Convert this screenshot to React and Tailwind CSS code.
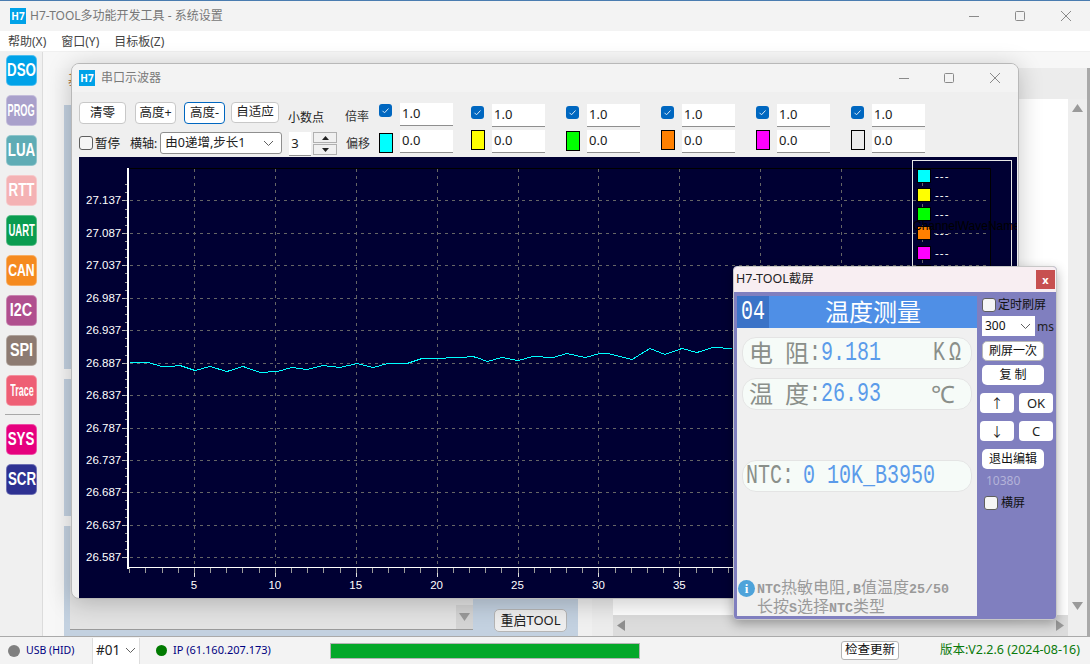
import React from "react";

const sideTop = [
  ["DSO", "bg-[#00a2e8]", "text-[18px] scale-x-[.74]"],
  ["PROG", "bg-[#a9a0cb]", "text-[17px] scale-x-[.54]"],
  ["LUA", "bg-[#5facb5]", "text-[18px] scale-x-[.74]"],
  ["RTT", "bg-[#f4b2b4]", "text-[18px] scale-x-[.74]"],
  ["UART", "bg-[#0a9c50]", "text-[17px] scale-x-[.56]"],
  ["CAN", "bg-[#f58a1f]", "text-[17px] scale-x-[.72]"],
  ["I2C", "bg-[#b04f8e]", "text-[18px] scale-x-[.8]"],
  ["SPI", "bg-[#8d7b72]", "text-[18px] scale-x-[.8]"],
  ["Trace", "bg-[#ee5f75]", "text-[16px] scale-x-[.56]"],
];
const sideBottom = [
  ["SYS", "bg-[#e6007e]", "text-[18px] scale-x-[.74]"],
  ["SCR", "bg-[#2e3192]", "text-[18px] scale-x-[.74]"],
];

const channels = [
  { box: "mt-[1px]", input: "mt-0", color: "bg-[#00ffff] mt-[3px]", w: "w-[92px]" },
  { box: "mt-[3px]", input: "mt-[1px]", color: "bg-[#ffff00]", w: "w-[95px]" },
  { box: "mt-[3px]", input: "mt-[1px]", color: "bg-[#00ff00] mt-[1px]", w: "w-[95px]" },
  { box: "mt-[3px]", input: "mt-[1px]", color: "bg-[#ff8000]", w: "w-[95px]" },
  { box: "mt-[3px]", input: "mt-[1px]", color: "bg-[#ff00ff]", w: "w-[95px]" },
  { box: "mt-[3px]", input: "mt-[1px]", color: "bg-[#ececec]", w: "w-[95px]" },
];

const yLabels = ["27.137","27.087","27.037","26.987","26.937","26.887","26.837","26.787","26.737","26.687","26.637","26.587"];
const yAt = (i) => 200.4 + i * 32.45;
const xAt = (n) => 129.2 + (n - 1) * 16.18;
const curve = [[130,362.5],[148,362.5],[162,366.5],[170,366.5],[180,365.5],[195,370.5],[210,366.5],[227,371.5],[243,366.5],[260,372.5],[277,371.5],[292,367.5],[307,369.5],[323,365.5],[340,367.5],[357,363.5],[373,367.5],[388,363.5],[407,363.5],[422,358.5],[445,358.5],[447,357.5],[462,357.5],[472,356.5],[477,357.5],[487,361.5],[502,357.5],[518,360.5],[533,356.5],[553,357.5],[567,353.5],[585,357.5],[600,353.5],[608,353.5],[632,359.5],[650,348.5],[665,354.5],[682,348.5],[697,352.5],[713,347.5],[732,348.5]];

function H7({ className }) {
  return <div className={"flex items-center justify-center bg-[#00a2e8] text-white font-bold text-[10px] leading-none " + className}>H7</div>;
}

function WinControls({ gapA, gapB }) {
  return (
    <div className="flex items-center text-[#8a8a8a]">
      <svg width="12" height="12" viewBox="0 0 12 12"><path d="M1 6.500h10" stroke="#8a8a8a" fill="none" /></svg>
      <svg className={gapA} width="12" height="12" viewBox="0 0 12 12"><rect x="1.500" y="1.500" width="9" height="9" rx="1" stroke="#8a8a8a" fill="none" /></svg>
      <svg className={gapB} width="12" height="12" viewBox="0 0 12 12"><path d="M1 1l10 10M11 1L1 11" stroke="#8a8a8a" fill="none" /></svg>
    </div>
  );
}

function Check() {
  return <span className="block w-[14px] h-[14px] rounded-[3px] border border-[#5f5f5f] bg-[#f6f6f6]" />;
}

function BlueCheck() {
  return (
    <span className="flex items-center justify-center w-[13px] h-[13px] rounded-[3px] bg-[#0067c0]">
      <svg width="9" height="9" viewBox="0 0 9 9"><path d="M1.500 4.800l2 2 4-4.300" stroke="#d7e8f7" strokeWidth="1" fill="none" /></svg>
    </span>
  );
}

function Chevron() {
  return <svg width="11" height="7" viewBox="0 0 11 7"><path d="M1 1l4.500 4.500L10 1" stroke="#606060" fill="none" /></svg>;
}

function Field({ children }) {
  return <div className="w-[53px] h-[23px] bg-white border-b border-[#8f8f8f] pl-[2px] text-[13px] leading-[21px] text-[#1a1a1a]">{children}</div>;
}

function Chart() {
  const minor = [];
  for (let n = 1; n <= 54; n++) minor.push(n);
  return (
    <svg className="block w-[938px] h-[441px] bg-[#000033]" viewBox="79 157 938 441" fontFamily="'Liberation Sans',sans-serif" fontSize="11.5">
      <rect x="128.500" y="168.500" width="861" height="399" fill="none" stroke="#000" />
      {yLabels.map((l, i) => (
        <g key={l}>
          <path d={`M122 ${Math.round(yAt(i)) + 0.5}h6`} stroke="#bdbdbd" />
          <path d={`M130 ${Math.round(yAt(i)) + 0.5}H990`} stroke="#666" strokeDasharray="3 4" />
          <text x="86" y={yAt(i) + 4} fill="#fff">{l}</text>
        </g>
      ))}
      {Array.from({ length: 46 }).map((_, i) => (
        <path key={i} d={`M125 ${Math.round(184.2 + i * 8.11) + 0.5}h3`} stroke="#9a9a9a" />
      ))}
      {[5,10,15,20,25,30,35,40,45,50].map((n) => (
        <g key={n}>
          <path d={`M${Math.round(xAt(n)) + 0.5} 169V566`} stroke="#666" strokeDasharray="3 4" />
          <path d={`M${Math.round(xAt(n)) + 0.5} 568v9`} stroke="#e0e0e0" />
          {n <= 35 && <text x={xAt(n)} y="589" fill="#fff" textAnchor="middle">{n}</text>}
        </g>
      ))}
      {minor.map((n) => (
        <path key={n} d={`M${Math.round(xAt(n)) + 0.5} 568v5`} stroke="#9a9a9a" />
      ))}
      <path d="M128 168V569" stroke="#fff" strokeWidth="2" />
      <path d="M127 567.500H990" stroke="#fff" />
      <polyline points={curve.map((p) => p.join(",")).join(" ")} fill="none" stroke="#00ffff" strokeWidth="1" shapeRendering="crispEdges" />
      <rect x="912.500" y="160.500" width="99" height="130" fill="#000033" stroke="#e8e8e8" />
      <path d="M913 168.500H990.500V290" fill="none" stroke="#000" />
      <path d="M913 200.500H990M913 233.500H990M913 265.500H990" stroke="#666" strokeDasharray="3 4" />
      <path d="M922.500 169V290" stroke="#666" strokeDasharray="3 4" />
      {[["#00ffff",170],["#ffff00",189],["#00ff00",208],["#ff8000",227],["#ff00ff",247],["#e8e8e8",266]].map(([c, y]) => (
        <g key={y}>
          <rect x="917.500" y={y - 0.5} width="13" height="13" fill={c} stroke="#000" />
          <text x="935" y={y + 10} fill="#fff" letterSpacing="1">---</text>
        </g>
      ))}
      <text x="913" y="230" fill="#000" fontSize="12">ChannelWaveName</text>
    </svg>
  );
}

const Mono = ({ children, className = "" }) => (
  <span className={"inline-block font-['Liberation_Mono',monospace] text-[20px] leading-none scale-y-[1.4] " + className}>{children}</span>
);

const Latin = ({ children }) => (
  <span className="font-['Liberation_Mono',monospace] font-bold text-[13.33px]">{children}</span>
);

function SideBtn({ children, className }) {
  return <div className={"bg-white rounded-[5px] border border-[#b9b9b9] h-[20px] w-[62px] flex items-center justify-center text-[12px] leading-none text-[#111] " + className}>{children}</div>;
}

function SmallBtn({ children, className = "" }) {
  return <div className={"bg-white rounded-[4px] h-[20px] w-[34px] flex items-center justify-center text-[13px] leading-none text-[#222] " + className}>{children}</div>;
}

export default function App() {
  return (
    <div className="relative w-[1090px] h-[664px] overflow-hidden bg-[#f3f3f3] border-t border-[#4a7cb0] flex flex-col font-['Noto_Sans','Noto_Sans_CJK_SC',sans-serif] text-[12px] text-[#222]">
      {/* title */}
      <div className="h-[30px] shrink-0 flex items-center pl-[10px] pr-[18px]">
        <H7 className="w-[16px] h-[16px]" />
        <span className="ml-[4px] text-[12px] text-[#777]">H7-TOOL多功能开发工具 - 系统设置</span>
        <div className="ml-auto"><WinControls gapA="ml-[34px]" gapB="ml-[34px]" /></div>
      </div>
      {/* menu */}
      <div className="h-[20px] shrink-0 bg-white flex items-center pl-[8px] gap-[15px] pt-[1px] text-[12px] text-[#444]">
        <span>帮助(X)</span><span>窗口(Y)</span><span>目标板(Z)</span>
      </div>
      <div className="h-px shrink-0 bg-[#f0f0f0]" />
      {/* main */}
      <div className="flex-1 flex min-h-0">
        <div className="w-[43px] shrink-0 bg-[#f0f0f0] border-r border-[#dcdcdc] pt-[3px] pl-[6px] flex flex-col gap-[9px]">
          {sideTop.map(([t, bg, txt]) => (
            <div key={t} className={"w-[31px] h-[31px] rounded-[5px] flex items-center justify-center overflow-hidden border border-white/30 font-['Liberation_Sans',sans-serif] font-bold text-white " + bg}>
              <span className={"inline-block whitespace-nowrap " + txt}>{t}</span>
            </div>
          ))}
          <div className="w-[35px] -ml-[1px] h-px bg-[#a8a8a8] mt-[-1px] mb-0" />
          {sideBottom.map(([t, bg, txt]) => (
            <div key={t} className={"w-[31px] h-[31px] rounded-[5px] flex items-center justify-center overflow-hidden border border-white/30 font-['Liberation_Sans',sans-serif] font-bold text-white " + bg}>
              <span className={"inline-block whitespace-nowrap " + txt}>{t}</span>
            </div>
          ))}
        </div>
        <div className="flex-1 flex bg-[#f7f7f7] pl-[12px] pt-[16px]">
          <div className="relative w-[523px] flex flex-col bg-[#f6f6f6]">
            <div className="h-[37px] pl-[13px] text-[13px] text-[#a5662a] leading-[22px]">基</div>
            <div className="flex-1 flex flex-col gap-[10px]">
              <div className="h-[264px] ml-[9px] bg-[#c3d1e0]" />
              <div className="h-[137px] ml-[9px] bg-[#c3d1e0]" />
              <div className="flex-1 ml-[9px] bg-[#c3d1e0] flex items-start">
                <div className="ml-[6px] w-[403px] h-[104px] bg-[#e3e3e3] border-b border-[#9a9a9a] flex items-end justify-end">
                  <div className="w-[17px] h-[24px] bg-[#d4d4d4] flex items-center justify-center">
                    <svg width="11" height="8" viewBox="0 0 11 8"><path d="M0 0h11L5.500 8z" fill="#9a9a9a" /></svg>
                  </div>
                </div>
                <div className="ml-[21px] mt-[83px] w-[73px] h-[23px] rounded-[5px] border border-[#b5b5b5] bg-[#eeeeee] flex items-center justify-center text-[13px]">重启TOOL</div>
              </div>
            </div>
          </div>
          <div className="flex-1 flex flex-col bg-[#ececec] border-l-[14px] border-[#f0f0f0]">
            <div className="h-[31px]" />
            <div className="flex-1 flex pl-[21px]">
              <div className="flex-1 flex flex-col">
                <div className="flex-1 bg-white" />
                <div className="h-[21px] flex items-center justify-between px-[4px] bg-[#dcdcdc]">
                  <svg width="8" height="11" viewBox="0 0 8 11"><path d="M8 0v11L0 5.500z" fill="#8f8f8f" /></svg>
                  <svg width="8" height="11" viewBox="0 0 8 11"><path d="M0 0v11l8-5.500z" fill="#9a9a9a" /></svg>
                </div>
              </div>
              <div className="w-[19px] flex flex-col items-center justify-between bg-[#eeeeee] pt-[5px] pb-[26px] pr-[1px]">
                <svg width="11" height="8" viewBox="0 0 11 8"><path d="M0 8h11L5.500 0z" fill="#9a9a9a" /></svg>
                <svg width="11" height="8" viewBox="0 0 11 8"><path d="M0 0h11L5.500 8z" fill="#9a9a9a" /></svg>
              </div>
            </div>
          </div>
          <div className="w-[3px] bg-[#a9a9a9]" />
        </div>
      </div>
      {/* status */}
      <div className="h-[28px] shrink-0 bg-[#f3f3f3] border-t border-[#aaaaaa] flex items-center pl-[8px] pr-[10px] text-[#000080]">
        <span className="w-[12px] h-[12px] rounded-full bg-[#808080]" />
        <span className="ml-[6px] w-[66px] text-[10.5px]">USB (HID)</span>
        <div className="w-[48px] h-[26px] bg-white border-x border-[#dddddd] flex items-center justify-between pl-[3px] pr-[3px] text-[13.5px] text-[#222]">#01<Chevron /></div>
        <span className="ml-[16px] w-[11px] h-[11px] rounded-full bg-[#007a00]" />
        <span className="ml-[6px] w-[157px] text-[11px]">IP (61.160.207.173)</span>
        <div className="w-[310px] h-[16px] bg-[#05a82a] border border-[#b5b5b5]" />
        <div className="ml-[201px] w-[58px] h-[19px] rounded-[3px] border border-[#b5b5b5] bg-white flex items-center justify-center text-[#111] text-[12.5px]">检查更新</div>
        <span className="ml-auto text-[#0a7a0a] text-[12.5px]">版本:V2.2.6 (2024-08-16)</span>
      </div>

      {/* serial scope window */}
      <div className="absolute left-[71px] top-[62px] w-[948px] h-[536px] rounded-t-[8px] rounded-bl-[8px] bg-[#f0f0f0] border border-[#b8b8b8] shadow-[0_4px_24px_rgba(0,0,0,0.22)] overflow-hidden flex flex-col">
        <div className="h-[28px] shrink-0 bg-[#f3f3f3] flex items-center pl-[7px] pr-[17px]">
          <H7 className="w-[16px] h-[16px]" />
          <span className="ml-[6px] text-[12px] text-[#7a7a7a]">串口示波器</span>
          <div className="ml-auto"><WinControls gapA="ml-[33px]" gapB="ml-[34px]" /></div>
        </div>
        <div className="h-[65px] shrink-0 flex pl-[7px] bg-[#efefef]">
          <div className="w-[266px] pt-[10px]">
            <div className="flex items-start">
              <div className="w-[47px] h-[22px] rounded-[4px] border border-[#c8c8c8] bg-white flex items-center justify-center text-[12.5px]">清零</div>
              <div className="ml-[9px] w-[41px] h-[22px] rounded-[4px] border border-[#c8c8c8] bg-white flex items-center justify-center text-[12.5px]">高度+</div>
              <div className="ml-[8px] w-[41px] h-[22px] rounded-[4px] border border-[#0067c0] bg-white flex items-center justify-center text-[12.5px]">高度-</div>
              <div className="ml-[6px] w-[48px] h-[21px] rounded-[4px] border border-[#c8c8c8] bg-white flex items-center justify-center text-[12.5px]">自适应</div>
              <span className="ml-[9px] mt-[7px] text-[12px] leading-[18px]">小数点</span>
            </div>
            <div className="flex items-start mt-[5px]">
              <span className="mt-[4px]"><Check /></span>
              <span className="ml-[2px] mt-[2px] text-[12.5px] leading-[20px]">暂停</span>
              <span className="ml-[10px] mt-[2px] text-[12px] leading-[20px]">横轴:</span>
              <div className="ml-[3px] w-[122px] h-[22px] bg-white border border-[#8f8f8f] rounded-[3px] flex items-center justify-between pl-[4px] pr-[7px] text-[12.5px]">由0递增,步长1<Chevron /></div>
              <div className="ml-[7px] w-[22px] h-[24px] bg-white border-b border-[#8f8f8f] pl-[2px] text-[13px] leading-[22px]">3</div>
              <div className="ml-[2px] flex flex-col gap-[1px]">
                <div className="w-[24px] h-[11px] bg-[#f0f0f0] border border-[#b0b0b0] flex items-center justify-center"><svg width="7" height="4" viewBox="0 0 7 4"><path d="M0 4h7L3.500 0z" fill="#222" /></svg></div>
                <div className="w-[24px] h-[11px] bg-[#f0f0f0] border border-[#b0b0b0] flex items-center justify-center"><svg width="7" height="4" viewBox="0 0 7 4"><path d="M0 0h7L3.500 4z" fill="#222" /></svg></div>
              </div>
            </div>
          </div>
          <div className="w-[34px] flex flex-col text-[12px] text-[#333]">
            <span className="mt-[16px] leading-[18px]">倍率</span>
            <span className="mt-[9px] pl-[1px] leading-[18px]">偏移</span>
          </div>
          {channels.map((c, i) => (
            <div key={i} className={"pt-[11px] shrink-0 " + c.w}>
              <div className="flex items-start h-[27px]">
                <div className={"w-[21px] " + c.box}><BlueCheck /></div>
                <div className={c.input}><Field>1.0</Field></div>
              </div>
              <div className="flex items-start">
                <div className="w-[21px]"><span className={"block w-[14px] h-[20px] border border-black " + c.color} /></div>
                <Field>0.0</Field>
              </div>
            </div>
          ))}
        </div>
        <div className="pl-[7px]"><Chart /></div>
      </div>

      {/* screenshot window */}
      <div className="absolute left-[733px] top-[265px] w-[324px] h-[354px] rounded-[4px] border border-[#c8c8c8] bg-[#807fbf] shadow-[0_4px_12px_rgba(0,0,0,0.3)] flex flex-col overflow-hidden">
        <div className="h-[25px] shrink-0 bg-[#f8eef2] flex items-center pl-[2px] pr-[1px]">
          <span className="text-[12.5px] text-[#222]">H7-TOOL截屏</span>
          <div className="ml-auto w-[19px] h-[19px] bg-[#c75050] flex items-center justify-center text-white text-[11px] font-bold leading-none">x</div>
        </div>
        <div className="flex-1 flex pt-[4px] pl-[3px] pb-[3px] min-h-0">
          <div className="w-[240px] shrink-0 bg-[#f0f0f0] flex flex-col relative">
            <div className="h-[32px] shrink-0 bg-[#4f8fe6] flex items-center text-white">
              <div className="w-[32px] h-full bg-[#3b73c7] flex items-center justify-center"><Mono>04</Mono></div>
              <span className="flex-1 text-center text-[24px] leading-none">温度测量</span>
            </div>
            <div className="mt-[9px] mx-[5px] h-[32px] rounded-[14px] bg-[#f6fbf8] border border-[#e4e4e4] flex items-center pl-[6px] text-[#8a8f8a] text-[24px] leading-none">
              <span>电</span><span className="ml-[12px]">阻</span>
              <Mono className="text-[#8a8f8a]">:</Mono><Mono className="text-[#5b9bea]">9.181</Mono>
              <Mono className="ml-auto mr-[6px] text-[#8a8f8a] tracking-[4px]">KΩ</Mono>
            </div>
            <div className="mt-[9px] mx-[5px] h-[32px] rounded-[14px] bg-[#f6fbf8] border border-[#e4e4e4] flex items-center pl-[6px] text-[#8a8f8a] text-[24px] leading-none">
              <span>温</span><span className="ml-[12px]">度</span>
              <Mono className="text-[#8a8f8a]">:</Mono><Mono className="text-[#5b9bea]">26.93</Mono>
              <span className="ml-auto mr-[16px]">℃</span>
            </div>
            <div className="mt-[50px] mx-[5px] h-[32px] rounded-[14px] bg-[#f6fbf8] border border-[#e4e4e4] flex items-center pl-[3px] leading-none">
              <Mono className="text-[#8a8f8a]">NTC:</Mono><Mono className="ml-[9px] text-[#5b9bea]">0 10K_B3950</Mono>
            </div>
            <div className="mt-auto -mb-[1px] pl-[1px] text-[#9a9a9a] text-[16px] leading-[17px] flex">
              <div className="w-[17px] h-[17px] mt-[1px] rounded-full bg-[#4ea3da] flex items-center justify-center text-white font-['Liberation_Serif',serif] font-bold text-[13px] leading-none shrink-0">i</div>
              <div className="ml-[2px] whitespace-nowrap">
                <div><Latin>NTC</Latin>热敏电阻<Latin>,B</Latin>值温度<Latin>25/50</Latin></div>
                <div><span>长按</span><Latin>S</Latin>选择<Latin>NTC</Latin>类型</div>
              </div>
            </div>
          </div>
          <div className="flex-1 relative text-[12px] text-[#111] pl-[5px] pt-[2px]">
            <div className="flex items-center"><Check /><span className="ml-[2px] leading-[14px]">定时刷屏</span></div>
            <div className="flex items-end mt-[4px]">
              <div className="w-[53px] h-[20px] bg-white flex items-center justify-between pl-[3px] pr-[4px] text-[12px]">300<Chevron /></div>
              <span className="ml-[2px] text-[#222] leading-[18px]">ms</span>
            </div>
            <SideBtn className="mt-[5px] border-[#0067c0]">刷屏一次</SideBtn>
            <SideBtn className="mt-[4px] border-transparent">复 制</SideBtn>
            <div className="flex -ml-[2px] mt-[8px] gap-[5px]"><SmallBtn>↑</SmallBtn><SmallBtn>OK</SmallBtn></div>
            <div className="flex -ml-[2px] mt-[8px] gap-[5px]"><SmallBtn>↓</SmallBtn><SmallBtn>C</SmallBtn></div>
            <SideBtn className="mt-[8px] border-transparent">退出编辑</SideBtn>
            <div className="mt-[4px] ml-[4px] text-[#b4b3d9] text-[12px] leading-[16px]">10380</div>
            <div className="flex items-center ml-[2px] mt-[7px]"><Check /><span className="ml-[3px] leading-[14px]">横屏</span></div>
          </div>
        </div>
      </div>
    </div>
  );
}
